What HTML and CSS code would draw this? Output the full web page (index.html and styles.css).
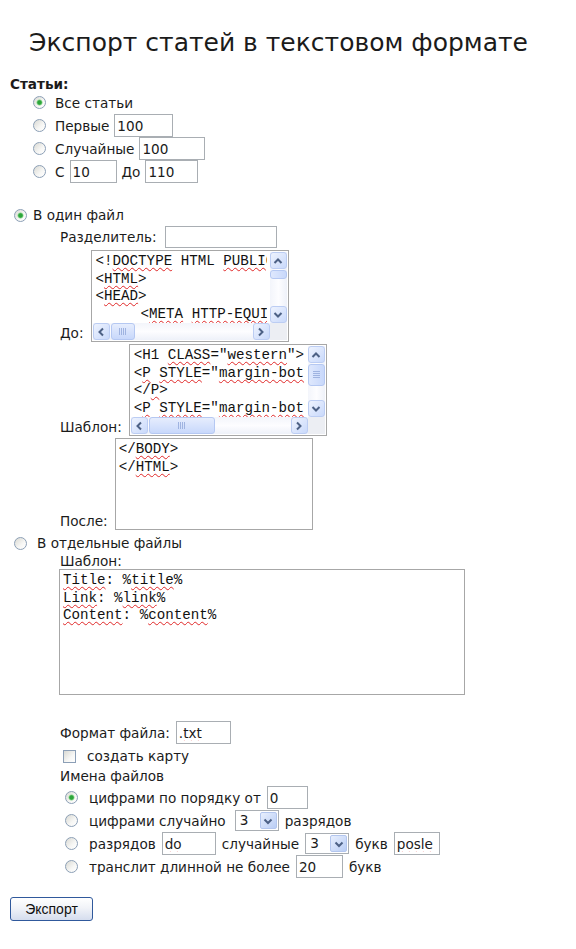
FILE: index.html
```html
<!DOCTYPE html>
<html>
 <head>
  <meta charset="utf-8">
  <title>Экспорт статей в текстовом формате</title>
  <link rel="stylesheet" href="styles.css">
 </head>
 <body>
  <h1 class="title">Экспорт статей в текстовом формате</h1>
  <form class="export">
    <div class="heading">Статьи:</div>
    <div class="choices">
      <label class="line"><input class="radio" type="radio" name="range" checked>Все статьи</label>
      <label class="line"><input class="radio" type="radio" name="range">Первые<input class="field w59" type="text" value="100"></label>
      <label class="line"><input class="radio" type="radio" name="range">Случайные<input class="field w66" type="text" value="100"></label>
      <label class="line"><input class="radio" type="radio" name="range">С<input class="field w47" type="text" value="10">До<input class="field w53" type="text" value="110"></label>
    </div>

    <div class="mode">
      <label class="line mode-line"><input class="radio" type="radio" name="mode" checked>В один файл</label>
      <div class="sub">
        <label class="line sep">Разделитель:<input class="field w112" type="text"></label>

        <div class="pair">
          <span class="pair-label">До:</span>
          <div class="box scroll">
<div class="text">&lt;!<span class="sp">DOCTYPE</span> HTML <span class="sp">PUBLI</span>C "-//W3C//DTD HTML 4.0 Transitional//EN"&gt;
&lt;<span class="sp">HTML</span>&gt;
&lt;<span class="sp">HEAD</span>&gt;
<span class="indent"></span>&lt;<span class="sp">META</span> <span class="sp">HTTP-EQUI</span>V="CONTENT-TYPE"&gt;</div>
            <div class="vbar">
              <span class="sbtn"><svg viewBox="0 0 10 8" width="10" height="8"><path d="M1.5 6 L5 2.5 L8.5 6" fill="none" stroke="#4d6185" stroke-width="2"/></svg></span>
              <span class="track"><span class="thumb v tiny"></span></span>
              <span class="sbtn down"><svg viewBox="0 0 10 8" width="10" height="8"><path d="M1.5 6 L5 2.5 L8.5 6" fill="none" stroke="#4d6185" stroke-width="2"/></svg></span>
            </div>
            <div class="hbar">
              <span class="sbtn left"><svg viewBox="0 0 10 8" width="10" height="8"><path d="M1.5 6 L5 2.5 L8.5 6" fill="none" stroke="#4d6185" stroke-width="2"/></svg></span>
              <span class="track"><span class="thumb h short"><span class="grip"></span></span></span>
              <span class="sbtn right"><svg viewBox="0 0 10 8" width="10" height="8"><path d="M1.5 6 L5 2.5 L8.5 6" fill="none" stroke="#4d6185" stroke-width="2"/></svg></span>
            </div>
            <div class="corner"></div>
          </div>
        </div>

        <div class="pair">
          <span class="pair-label">Шаблон:</span>
          <div class="box scroll">
<div class="text">&lt;H1 <span class="sp">CLASS</span>="<span class="sp">western</span>"&gt;
&lt;<span class="sp">P</span> <span class="sp">STYLE</span>="<span class="sp">margin-bot</span>tom: 0cm"&gt;
&lt;/<span class="sp">P</span>&gt;
&lt;<span class="sp">P</span> <span class="sp">STYLE</span>="<span class="sp">margin-bot</span>tom: 0cm"&gt;</div>
            <div class="vbar">
              <span class="sbtn"><svg viewBox="0 0 10 8" width="10" height="8"><path d="M1.5 6 L5 2.5 L8.5 6" fill="none" stroke="#4d6185" stroke-width="2"/></svg></span>
              <span class="track"><span class="thumb v mid"><span class="grip"></span></span></span>
              <span class="sbtn down"><svg viewBox="0 0 10 8" width="10" height="8"><path d="M1.5 6 L5 2.5 L8.5 6" fill="none" stroke="#4d6185" stroke-width="2"/></svg></span>
            </div>
            <div class="hbar">
              <span class="sbtn left"><svg viewBox="0 0 10 8" width="10" height="8"><path d="M1.5 6 L5 2.5 L8.5 6" fill="none" stroke="#4d6185" stroke-width="2"/></svg></span>
              <span class="track"><span class="thumb h long"><span class="grip"></span></span></span>
              <span class="sbtn right"><svg viewBox="0 0 10 8" width="10" height="8"><path d="M1.5 6 L5 2.5 L8.5 6" fill="none" stroke="#4d6185" stroke-width="2"/></svg></span>
            </div>
            <div class="corner"></div>
          </div>
        </div>

        <div class="pair">
          <span class="pair-label">После:</span>
          <div class="box">
<div class="text">&lt;/<span class="sp">BODY</span>&gt;
&lt;/<span class="sp">HTML</span>&gt;</div>
          </div>
        </div>
      </div>

      <label class="line mode-line wide-gap"><input class="radio" type="radio" name="mode">В отдельные файлы</label>
      <div class="sub">
        <div class="plain">Шаблон:</div>
        <div class="box big">
<div class="text"><span class="sp">Title</span>: %<span class="sp">title</span>%
<span class="sp">Link</span>: %<span class="sp">link</span>%
<span class="sp">Content</span>: %<span class="sp">content</span>%</div>
        </div>

        <label class="line fmt">Формат файла:<input class="field w55 spell" type="text" value=".txt"></label>
        <label class="line check"><input class="checkbox" type="checkbox">создать карту</label>
        <div class="plain">Имена файлов</div>
        <div class="names">
          <label class="line"><input class="radio" type="radio" name="names" checked>цифрами по порядку от<input class="field w41" type="text" value="0"></label>
          <label class="line"><input class="radio" type="radio" name="names">цифрами случайно
            <span class="select spaced"><span class="val">3</span><span class="drop"><svg viewBox="0 0 10 8" width="10" height="8"><path d="M1.5 2.5 L5 6 L8.5 2.5" fill="none" stroke="#4d6185" stroke-width="2"/></svg></span></span>разрядов</label>
          <label class="line"><input class="radio" type="radio" name="names">разрядов<input class="field w54 spell" type="text" value="do">случайные
            <span class="select"><span class="val">3</span><span class="drop"><svg viewBox="0 0 10 8" width="10" height="8"><path d="M1.5 2.5 L5 6 L8.5 2.5" fill="none" stroke="#4d6185" stroke-width="2"/></svg></span></span>букв<input class="field w46 spell" type="text" value="posle"></label>
          <label class="line"><input class="radio" type="radio" name="names">транслит длинной не более<input class="field w47" type="text" value="20">букв</label>
        </div>
      </div>
    </div>

    <button class="btn" type="button">Экспорт</button>
  </form>
 </body>
</html>
```

FILE: styles.css
```css
* {
  box-sizing: border-box;
}
body {
  margin: 0;
  padding: 0 10px;
  font: 13.6px "DejaVu Sans", Verdana, sans-serif;
  color: #1b1b1b;
  background: #fff;
}
.title {
  margin: 28px 19px 0 0;
  font-size: 25px;
  font-weight: normal;
  line-height: 30px;
  text-align: center;
}
.heading {
  margin-top: 19px;
  font-weight: bold;
  line-height: 14px;
}

.line {
  display: flex;
  align-items: center;
  gap: 5px;
  height: 23px;
  white-space: nowrap;
}
.choices {
  padding-left: 23px;
}
.choices .radio {
  margin-right: 4px;
}

/* radio / checkbox in the old blue-grey theme */
.radio,
.checkbox {
  appearance: none;
  flex: none;
  margin: 0;
  width: 13px;
  height: 13px;
  border: 1px solid #8c9fb6;
  background: linear-gradient(135deg, #d9d9d3, #f7f7f5 60%, #fff);
}
.radio {
  border-radius: 50%;
}
.radio:checked {
  background:
    radial-gradient(circle, #2da53b 0 1.8px, #8bd78f 2.6px, transparent 3.4px),
    linear-gradient(135deg, #d9d9d3, #f7f7f5 60%, #fff);
}

.field {
  height: 23px;
  margin: 0;
  padding: 0 2px;
  border: 1px solid #a9aeb3;
  font: 13.6px "DejaVu Sans", Verdana, sans-serif;
  color: #1b1b1b;
  outline: none;
}
.spell {
  text-decoration: underline wavy #e02828;
  text-decoration-thickness: 1px;
  text-underline-offset: 2px;
}
.w41 { width: 41px; }
.w46 { width: 46px; }
.w47 { width: 47px; }
.w53 { width: 53px; }
.w54 { width: 54px; }
.w55 { width: 55px; }
.w59 { width: 59px; }
.w66 { width: 66px; }
.w112 { width: 112px; }

.mode {
  padding-left: 4px;
}
.mode-line {
  height: 20px;
  margin-top: 22px;
  gap: 6px;
}
.mode-line.wide-gap {
  margin-top: 3px;
  gap: 10px;
}
.sub {
  padding-left: 46px;
}
.sep {
  height: 22px;
  margin-top: 1px;
  gap: 8px;
}
.sep .field {
  height: 22px;
}

/* text boxes */
.pair {
  display: flex;
  align-items: flex-end;
  gap: 7px;
  margin-top: 2px;
}
.pair-label {
  line-height: 18px;
}
.box {
  width: 198px;
  height: 92px;
  border: 1px solid #a7a7a7;
  background: #fff;
  font: 14.2px "Liberation Mono", "Courier New", monospace;
  line-height: 17.5px;
  color: #111;
  overflow: hidden;
}
.box .text {
  padding: 2px 3px;
  white-space: pre;
  overflow: hidden;
  min-width: 0;
}
.box.scroll {
  display: grid;
  grid-template-columns: minmax(0, 1fr) 17px;
  grid-template-rows: minmax(0, 1fr) 17px;
  padding: 1px;
}
.box.scroll .text {
  padding: 1px 0 1px 3px;
  margin-right: 3px;
}
.box.big {
  width: 406px;
  height: 126px;
  margin-left: -1px;
}
.indent {
  display: inline-block;
  width: 45px;
}
.sp {
  text-decoration: underline wavy #e02828;
  text-decoration-thickness: 1px;
  text-underline-offset: 2px;
  text-decoration-skip-ink: none;
}

/* scrollbars */
.vbar,
.hbar {
  display: flex;
  background: linear-gradient(90deg, #f3f5fb, #fdfdff 50%, #eef1f9);
}
.vbar {
  flex-direction: column;
}
.hbar {
  background: linear-gradient(#f3f5fb, #fdfdff 50%, #eef1f9);
}
.sbtn {
  flex: none;
  display: flex;
  align-items: center;
  justify-content: center;
  width: 17px;
  height: 17px;
  border: 1px solid #bccdf3;
  border-radius: 3px;
  background: linear-gradient(135deg, #eef3fe, #c9d9fb);
}
.sbtn.down svg { transform: rotate(180deg); }
.sbtn.left svg { transform: rotate(-90deg); }
.sbtn.right svg { transform: rotate(90deg); }
.track {
  flex: 1;
  display: flex;
  padding: 1px 0;
}
.hbar .track {
  padding: 0 1px;
}
.vbar .track {
  flex-direction: column;
}
.thumb {
  display: flex;
  align-items: center;
  justify-content: center;
  border: 1px solid #b5c8f2;
  border-radius: 3px;
  background: linear-gradient(90deg, #dfe8fd, #c8d8fb);
}
.thumb.v {
  width: 17px;
}
.thumb.h {
  height: 17px;
  background: linear-gradient(#e6edfd, #c8d8fb);
}
.thumb.tiny { height: 9px; }
.thumb.mid { height: 22px; }
.thumb.short { width: 24px; }
.thumb.long { width: 66px; }
.thumb.h .grip {
  width: 8px;
  height: 7px;
  background: repeating-linear-gradient(90deg, #9fb3e0 0 1px, transparent 1px 2px);
}
.thumb.v .grip {
  width: 7px;
  height: 8px;
  background: repeating-linear-gradient(#9fb3e0 0 1px, transparent 1px 2px);
}
.corner {
  background: #eceef3;
}

.plain {
  line-height: 16px;
}
.fmt {
  margin-top: 26px;
  gap: 6px;
}
.check {
  height: 20px;
  margin-top: 2px;
  padding-left: 3px;
  gap: 11px;
}
.check + .plain {
  line-height: 20px;
}
.names {
  padding-left: 5px;
}
.names .line {
  gap: 6px;
}
.names .radio {
  margin-right: 5px;
}

.select {
  display: inline-flex;
  width: 44px;
  height: 21px;
  border: 1px solid #a9aeb3;
  background: #fff;
}
.select.spaced {
  margin-left: 3px;
}
.select .val {
  flex: 1;
  padding-left: 4px;
  line-height: 19px;
}
.select .drop {
  display: flex;
  align-items: center;
  justify-content: center;
  width: 17px;
  margin: 1px;
  border: 1px solid #b3c6ee;
  border-radius: 2px;
  background: linear-gradient(135deg, #e8effd, #b9cdf5);
}

.btn {
  display: block;
  width: 83px;
  height: 24px;
  margin-top: 19px;
  border: 1px solid #30599c;
  border-radius: 3px;
  background: linear-gradient(#ffffff, #f1f3f8 45%, #d5ddee);
  font: 14px "Liberation Sans", Arial, sans-serif;
  color: #111;
}
```
